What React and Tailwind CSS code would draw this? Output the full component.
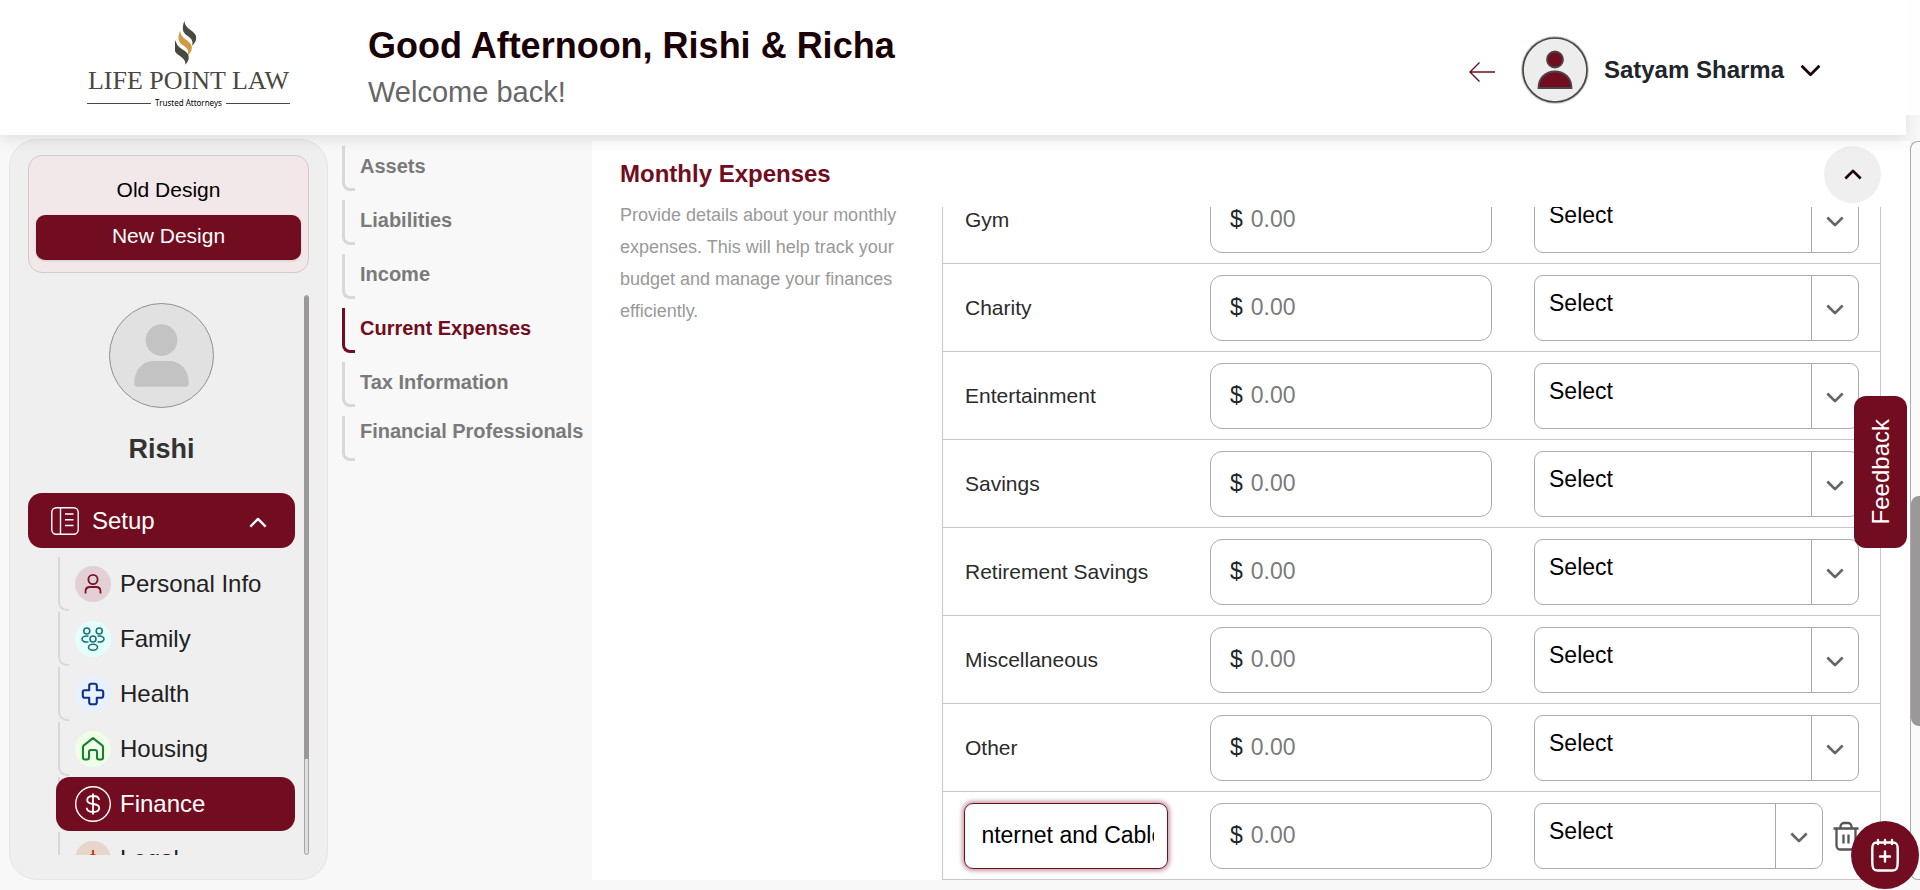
import { useEffect, useRef } from "react";

const steps = [
  { label: "Assets" },
  { label: "Liabilities" },
  { label: "Income" },
  { label: "Current Expenses", active: true },
  { label: "Tax Information" },
  { label: "Financial Professionals", raised: true },
];

const expenses = [
  "Gym",
  "Charity",
  "Entertainment",
  "Savings",
  "Retirement Savings",
  "Miscellaneous",
  "Other",
];

function Chevron({ up = false, weight = 2.6, className }) {
  return (
    <svg viewBox="0 0 20 12" className={className} fill="none" stroke="currentColor" strokeWidth={weight} strokeLinejoin="round" aria-hidden="true">
      <path d={up ? "M1.5 10.5 10 2l8.5 8.5" : "M1.5 1.5 10 10l8.5-8.5"} />
    </svg>
  );
}

function Logo() {
  return (
    <a href="#home" aria-label="Life Point Law" className="flex w-[203px] flex-col items-center text-[#4a4740]">
      <svg viewBox="0 0 64 132" className="mr-1.5 h-11 w-[22px]" aria-hidden="true">
        <path d="M27 0C19 22 21 34 36 44c15 10 18 18 14 30 11-9 15-20 11-31C54 26 30 26 27 0z" fill="#4a4840" />
        <path d="M14 29C6 51 8 63 23 73c15 10 18 18 14 30 11-9 15-20 11-31C41 55 17 55 14 29z" fill="#d09b42" />
        <path d="M1 58c-8 22-6 34 9 44 15 10 22 18 20 29 9-9 13-21 8-31C29 84 4 84 1 58z" fill="#4a4840" />
      </svg>
      <span className="whitespace-nowrap font-['Liberation_Serif',serif] text-[26px] leading-8">LIFE POINT LAW</span>
      <span className="flex w-full items-center gap-1 font-['Noto_Sans',sans-serif] text-[8px] leading-3 text-black">
        <span className="h-px flex-1 bg-[#4a4740]" />
        Trusted Attorneys
        <span className="h-px flex-1 bg-[#4a4740]" />
      </span>
    </a>
  );
}

function Header() {
  return (
    <div className="relative z-10 flex items-start">
      <header className="flex h-[135px] flex-1 items-start justify-between bg-white pl-[87px] pr-[85px] shadow-[0_4px_14px_rgba(40,60,70,0.13)]">
        <div className="flex items-start gap-[78px]">
          <div className="pt-[21px]">
            <Logo />
          </div>
          <div className="pt-6">
            <h1 className="text-[36px] font-bold leading-[44px] text-[#1a0207]">Good Afternoon, Rishi &amp; Richa</h1>
            <p className="mt-1 text-[29px] leading-10 text-[#666]">Welcome back!</p>
          </div>
        </div>
        <div className="flex items-center pt-9">
          <button type="button" aria-label="Back" className="mr-[26px] pt-1 text-[#720c20]">
            <svg viewBox="0 0 26 20" className="h-5 w-[26px]" fill="none" stroke="currentColor" strokeWidth="1.4">
              <path d="M26 10H1M10.5 .5 1 10l9.500 9.500" />
            </svg>
          </button>
          <button type="button" className="flex items-center text-[24px] font-bold leading-8 text-[#212529]">
            <svg viewBox="0 0 68 68" className="size-[68px]" aria-hidden="true">
              <circle cx="34" cy="34" r="32.500" fill="#ededed" stroke="#c4c1c0" strokeWidth="2.600" />
              <circle cx="34" cy="34" r="32" fill="none" stroke="#4c4543" strokeWidth="1.600" />
              <circle cx="34" cy="23.500" r="8" fill="#720c20" stroke="#4c4543" strokeWidth="1.800" />
              <path d="M17.500 52c0-10 7-16.500 16.500-16.500S50.500 42 50.500 52z" fill="#720c20" stroke="#4c4543" strokeWidth="1.800" />
            </svg>
            <span className="ml-[15px] mr-4">Satyam Sharma</span>
            <Chevron className="h-[13px] w-[21px] text-[#1a0207]" />
          </button>
        </div>
      </header>
      <div className="h-[115px] w-[14px] bg-[#fefefe]" />
    </div>
  );
}

const menu = [
  {
    label: "Personal Info",
    tone: "bg-[#e2d0d5] text-[#7a1229]",
    icon: (
      <g strokeWidth="1.800">
        <circle cx="18" cy="13.500" r="4.600" />
        <path d="M10.500 27.500v-2c0-3 2-4.500 4.500-4.500h6c2.500 0 4.500 1.500 4.500 4.500v2" />
      </g>
    ),
  },
  {
    label: "Family",
    tone: "bg-[#e4fffb] text-[#1a7378]",
    icon: (
      <g strokeWidth="1.600">
        <circle cx="11.800" cy="10" r="3" />
        <circle cx="24.200" cy="10" r="3" />
        <circle cx="18" cy="18" r="3" />
        <ellipse cx="18" cy="26.300" rx="4.500" ry="3" />
        <path d="M13.500 15.300c-4-.8-6.500.7-6.500 2.700s2.500 3.500 6.500 2.800M22.500 15.300c4-.8 6.500.7 6.500 2.700s-2.500 3.500-6.500 2.800" />
      </g>
    ),
  },
  {
    label: "Health",
    tone: "bg-[#e7f1ff] text-[#102f86]",
    icon: (
      <path
        strokeWidth="2.100"
        d="M16 7.800h4a1.800 1.800 0 0 1 1.800 1.800v4.600h4.600a1.800 1.800 0 0 1 1.800 1.800v4a1.800 1.800 0 0 1-1.800 1.800h-4.600v4.600a1.800 1.800 0 0 1-1.800 1.800h-4a1.800 1.800 0 0 1-1.800-1.800v-4.600H9.600A1.800 1.800 0 0 1 7.800 20v-4a1.800 1.800 0 0 1 1.800-1.800h4.600V9.600A1.800 1.800 0 0 1 16 7.800z"
      />
    ),
  },
  {
    label: "Housing",
    tone: "bg-[#effee6] text-[#17802f]",
    icon: (
      <path
        strokeWidth="2.100"
        d="M18 7.200 8.800 14.300A2 2 0 0 0 8 16v10.500a2 2 0 0 0 2 2h2a2 2 0 0 0 2-2V21a2 2 0 0 1 2-2h4a2 2 0 0 1 2 2v5.500a2 2 0 0 0 2 2h2a2 2 0 0 0 2-2V16a2 2 0 0 0-.8-1.700z"
      />
    ),
  },
  {
    label: "Finance",
    active: true,
    tone: "text-white",
    icon: (
      <>
        <circle cx="18" cy="18" r="17.300" strokeWidth="1.400" />
        <path strokeWidth="1.800" d="M18 7.500v21M24 14c0-3-2.500-4-6-4s-5.800 1.300-5.800 4 2 3.600 5.800 4 6.200 1.200 6.200 4-2.700 4-6.200 4-6.200-1-6.200-4.200" />
      </>
    ),
  },
  {
    label: "Legal",
    tone: "bg-[#e8d5ca] text-[#b8470f]",
    icon: <path strokeWidth="2" d="M18 9v19M10 16c3 0 5-.5 8-3 3 2.500 5 3 8 3M11 16l-3 7h6zM25 16l-3 7h6zM14 28h8" />,
  },
];

function Sidebar() {
  return (
    <aside className="mt-1 flex w-[319px] flex-col rounded-[28px] border border-[#e5e5e5] bg-[#efefef] pb-6 pl-[18px] pt-[15px]">
      <div className="mr-[18px] flex h-[118px] shrink-0 flex-col gap-0.5 rounded-[14px] border border-[#d0cbcd] bg-[#f2e7e9] px-[7px] pt-3 text-[21px]">
        <button type="button" className="h-[45px] rounded-[9px] pb-0.5 text-black">Old Design</button>
        <button type="button" className="h-[45px] rounded-[9px] bg-[#720c20] pb-[3px] text-white shadow">New Design</button>
      </div>
      <div className="mr-[18px] mt-[22px] flex min-h-0 flex-1 justify-between">
        <div className="w-[267px] overflow-hidden">
          <svg viewBox="0 0 106 106" className="mx-auto mt-2 size-[105px]" aria-hidden="true">
            <circle cx="53" cy="53" r="52.500" fill="#e1e1e1" stroke="#8f8f8f" />
            <circle cx="53" cy="37.500" r="16" fill="#c3c3c3" />
            <path d="M25.500 81c0-13 8-22.500 20-22.500h15c12 0 20 9.500 20 22.500 0 2-1 3.500-3 3.500h-49c-2 0-3-1.500-3-3.500z" fill="#c3c3c3" />
          </svg>
          <h2 className="mt-[23px] text-center text-[27px] font-bold leading-9 text-[#333]">Rishi</h2>
          <button type="button" aria-expanded="true" className="mt-[26px] flex h-[55px] w-full items-center rounded-[14px] bg-[#720c20] pl-[23px] pr-[28px] text-[24px] text-white">
            <svg viewBox="0 0 28 28" className="size-7" fill="none" stroke="currentColor" strokeWidth="1.400" aria-hidden="true">
              <rect x=".8" y=".8" width="26.400" height="26.400" rx="4.500" />
              <path d="M9.500 1v26M14 7h8.500M14 12.700h8.500M14 18.500h8.500" />
            </svg>
            <span className="ml-[13px] flex-1 text-left">Setup</span>
            <Chevron up className="mt-1 h-[11px] w-[18px]" />
          </button>
          <ul className="ml-7 mt-[9px]">
            {menu.map(({ label, tone, icon, active }) => (
              <li key={label} className="relative h-[55px]">
                <span className="absolute left-0.5 top-0 h-[54px] w-[11px] rounded-bl-[9px] border-b-2 border-l-2 border-[#d8d8d8]" />
                <a
                  href={`#${label}`}
                  className={
                    active
                      ? "relative flex h-[54px] items-center rounded-[14px] bg-[#720c20] pl-[19px] text-[24px] text-white"
                      : "relative flex h-[54px] items-center pl-[19px] text-[24px] text-[#212121]"
                  }
                >
                  <span className={`flex size-9 items-center justify-center rounded-full ${tone}`}>
                    <svg viewBox="0 0 36 36" className="size-9 shrink-0" fill="none" stroke="currentColor" strokeLinejoin="round" aria-hidden="true">
                      {icon}
                    </svg>
                  </span>
                  <span className="ml-[9px]">{label}</span>
                </a>
              </li>
            ))}
          </ul>
        </div>
        <div className="w-[5px] rounded-full border border-[#a5a5a5] bg-[#dedede]">
          <div className="-mx-px h-[83%] rounded-t-full bg-[#9a9898]" />
        </div>
      </div>
    </aside>
  );
}

function Steps() {
  return (
    <nav className="ml-[14px] flex w-[250px] flex-col gap-[9px] pt-[11px]">
      {steps.map(({ label, active, raised }) => (
        <a
          key={label}
          href={`#${label}`}
          className={`flex h-[45px] gap-[5px] whitespace-nowrap text-[20px] font-bold leading-6 ${active ? "text-[#720c20]" : "text-[#7a7a7a]"}`}
        >
          <span className={`w-[13px] rounded-bl-lg border-b-[3px] border-l-[3px] ${active ? "border-[#720c20]" : "border-[#d8d8d8]"}`} />
          <span className={raised ? "pt-[3px]" : "pt-2"}>{label}</span>
        </a>
      ))}
    </nav>
  );
}

function AmountField({ label }) {
  return (
    <label className="flex h-[66px] items-center gap-2 rounded-xl border border-[#aaa] pl-[19px] text-[23px] text-[#212529]">
      $
      <input
        type="text"
        aria-label={`${label} amount`}
        placeholder="0.00"
        className="h-full w-full min-w-0 rounded-xl bg-transparent outline-none placeholder:text-[#7b7b7b]"
      />
    </label>
  );
}

function FrequencyField({ label }) {
  return (
    <div className="flex h-[66px] flex-1 rounded-[9px] border border-[#aaa]">
      <select aria-label={`${label} frequency`} className="min-w-0 flex-1 appearance-none bg-transparent pb-2 pl-[14px] text-[23px] text-black outline-none">
        <option>Select</option>
        <option>Monthly</option>
        <option>Yearly</option>
      </select>
      <span className="flex w-[47px] items-center justify-center border-l border-[#aaa] pt-1">
        <Chevron weight={3} className="h-[11px] w-[18px] text-[#666]" />
      </span>
    </div>
  );
}

function ExpenseTable() {
  const customName = useRef(null);
  useEffect(() => {
    customName.current.scrollLeft = 7;
  }, []);

  return (
    <table className="w-full shrink-0 table-fixed border-separate border-spacing-0 border-x border-[#c8c8c8]">
      <colgroup>
        <col className="w-[246px]" />
        <col className="w-[324px]" />
        <col />
      </colgroup>
      <tbody>
        {expenses.map((name) => (
          <tr key={name} className="h-[88px]">
            <th scope="row" className="border-b border-[#c8c8c8] pl-[22px] text-left text-[21px] font-normal text-[#2b2b2b]">{name}</th>
            <td className="border-b border-[#c8c8c8] pl-[21px] pr-[21px]">
              <AmountField label={name} />
            </td>
            <td className="border-b border-[#c8c8c8] pl-[21px] pr-[21px]">
              <div className="flex">
                <FrequencyField label={name} />
              </div>
            </td>
          </tr>
        ))}
        <tr className="h-[88px]">
          <td className="border-b border-[#c8c8c8] pl-[21px] pr-[21px]">
            <input
              ref={customName}
              type="text"
              aria-label="Expense name"
              defaultValue="Internet and Cable"
              className="block h-[66px] w-full rounded-[9px] border border-[#720c20] pl-[17px] pr-[13px] text-[23px] text-black shadow-[0_0_4px_2px_rgba(114,12,32,0.4)] outline-none"
            />
          </td>
          <td className="border-b border-[#c8c8c8] pl-[21px] pr-[21px]">
            <AmountField label="Custom" />
          </td>
          <td className="border-b border-[#c8c8c8] pl-[21px] pr-[21px]">
            <div className="flex items-center">
              <FrequencyField label="Custom" />
              <button type="button" aria-label="Delete expense" className="ml-[10px] text-[#555]">
                <svg viewBox="0 0 26 30" className="h-[30px] w-[26px]" fill="none" stroke="currentColor" strokeWidth="2.300">
                  <path d="M.5 7.500h25M3.500 7.500v17a4 4 0 0 0 4 4h11a4 4 0 0 0 4-4v-17M7.500 7V5.500a3.500 3.500 0 0 1 3.500-3.500h4a3.500 3.500 0 0 1 3.500 3.500V7M10.500 13.500v9M15.500 13.500v9" />
                </svg>
              </button>
            </div>
          </td>
        </tr>
      </tbody>
    </table>
  );
}

export default function App() {
  return (
    <div className="flex h-screen flex-col overflow-hidden bg-[#f8f8f8] font-['Liberation_Sans',Arial,sans-serif]">
      <Header />
      <div className="flex min-h-0 flex-1 pb-2.5 pl-[9px]">
        <Sidebar />
        <Steps />
        <main className="mt-1.5 flex flex-1 bg-white pl-7 pr-[29px]">
          <div className="w-[290px] shrink-0 pt-[17px]">
            <h2 className="text-[24px] font-bold leading-8 text-[#720c20]">Monthly Expenses</h2>
            <p className="mt-[9px] text-[18px] leading-8 text-[#999]">
              Provide details about your monthly expenses. This will help track your budget and manage your finances efficiently.
            </p>
          </div>
          <div className="ml-8 flex min-h-0 flex-1 flex-col pt-[5px]">
            <button type="button" aria-label="Collapse" className="mb-1 flex size-[57px] shrink-0 items-center justify-center self-end rounded-full bg-[#efefef] text-[#1a0207]">
              <Chevron up weight={3} className="h-[11px] w-[18px]" />
            </button>
            <div className="flex min-h-0 flex-1 flex-col justify-end overflow-hidden">
              <ExpenseTable />
            </div>
          </div>
        </main>
        <div className="mt-1.5 w-2.5 overflow-hidden rounded-l-lg border border-r-0 border-[#aaa] bg-[#fafafa]">
          <div className="mt-[354px] h-[230px] rounded-l-lg bg-[#9a9898]" />
        </div>
      </div>

      <button
        type="button"
        className="fixed right-[13px] top-[396px] z-20 flex h-[152px] w-[53px] items-center justify-center rounded-xl bg-[#720c20] text-[24px] text-white"
      >
        <span className="rotate-180 [writing-mode:vertical-rl]">Feedback</span>
      </button>

      <button
        type="button"
        aria-label="Book appointment"
        className="fixed bottom-px right-px z-20 flex size-[68px] items-center justify-center rounded-full bg-[#720c20] text-white"
      >
        <svg viewBox="0 0 28 34" className="h-[34px] w-7" fill="none" stroke="currentColor" strokeWidth="2.400" strokeLinecap="round">
          <path d="M6 4.500C2 4.500 1.300 7 1.300 11v13c0 6 1 8.500 5 8.500h15.400c4 0 5-2.500 5-8.500V11c0-4-.7-6.500-4.700-6.500zM7 2v4M14 2v4M21 2v4M14 13.500v10M9 18.500h10" />
        </svg>
      </button>
    </div>
  );
}
